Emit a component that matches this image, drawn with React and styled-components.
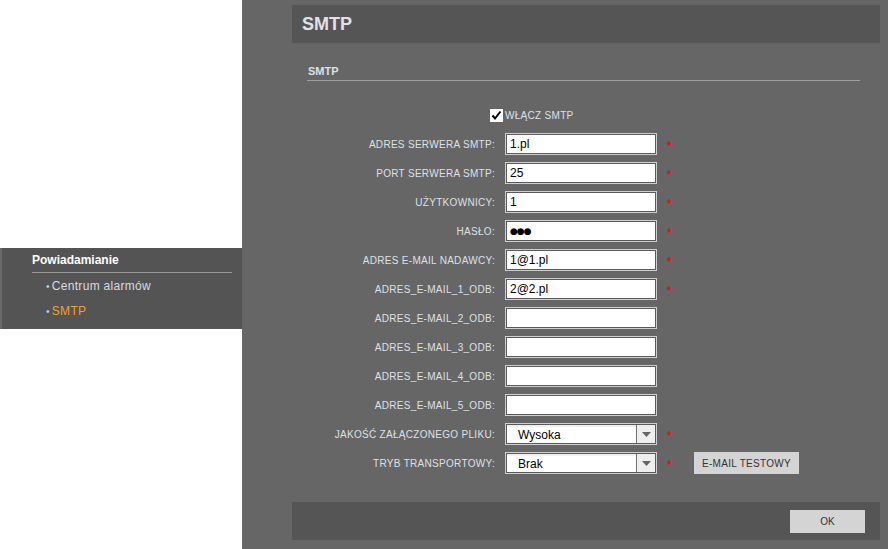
import React from "react";
import styled, { createGlobalStyle } from "styled-components";

const Global = createGlobalStyle`
  html, body { margin: 0; padding: 0; background: #fff; }
  body { font-family: "Liberation Sans", Arial, sans-serif; }
  * { box-sizing: border-box; }
`;

const Page = styled.div`
  display: flex;
  width: 888px;
  height: 549px;
  overflow: hidden;
`;

const LeftCol = styled.div`
  width: 242px;
  flex: none;
  background: #fff;
  padding-top: 248px;
`;

const Sidebar = styled.nav`
  background: #545454;
  border-left: 2px solid #6a6a6a;
  padding: 4px 10px 5px 30px;
`;

const SideHeading = styled.div`
  font-weight: bold;
  font-size: 12px;
  line-height: 16px;
  color: #fff;
  padding-bottom: 4px;
  border-bottom: 1px solid #9a9a9a;
  margin-bottom: 1px;
`;

const SideItem = styled.div`
  font-size: 12px;
  line-height: 24px;
  letter-spacing: 0.3px;
  padding-left: 14px;
  color: ${(p) => (p.$active ? "#f0a030" : "#d8dbe0")};
  &::before {
    content: "•";
    color: #c8c8c8;
    margin-right: 2px;
    font-size: 10px;
  }
`;

const Main = styled.main`
  flex: 1;
  background: #666;
  padding: 5px 8px 0 50px;
  display: flex;
  flex-direction: column;
`;

const HeaderBar = styled.div`
  height: 38px;
  background: #555;
  display: flex;
  align-items: center;
  padding-left: 10px;
  font-weight: bold;
  font-size: 18px;
  color: #e2e2e6;
`;

const Section = styled.section`
  margin: 21px 20px 0 15px;
`;

const SectionTitle = styled.div`
  font-weight: bold;
  font-size: 11px;
  line-height: 14px;
  color: #dde0e6;
  padding: 0 0 2px 1px;
  border-bottom: 1px solid #a0a0a0;
`;

const Form = styled.div`
  margin-top: 23px;
  display: grid;
  grid-template-columns: 188px 152px 7px auto;
  grid-auto-rows: 22px;
  column-gap: 10px;
  row-gap: 7px;
  align-items: center;
`;

const CheckRow = styled.label`
  grid-column: 1 / -1;
  padding-left: 183px;
  display: flex;
  align-items: center;
  gap: 2px;
  font-size: 10px;
  letter-spacing: 0.3px;
  color: #dde0e6;
`;

const CheckBox = styled.span`
  width: 13px;
  height: 13px;
  background: #fff;
  display: inline-flex;
  align-items: center;
  justify-content: center;
`;

const Label = styled.div`
  text-align: right;
  font-size: 10px;
  letter-spacing: 0.3px;
  color: #dde0e6;
  white-space: nowrap;
`;

const Field = styled.input`
  width: 152px;
  height: 22px;
  border: 1px solid #cfcfcf;
  box-shadow: inset 0 0 0 1px #5a5a5a;
  background: #fff;
  padding: 0 4px;
  font-family: ${(p) =>
    p.$dots ? '"DejaVu Sans", sans-serif' : '"Liberation Sans", Arial, sans-serif'};
  font-size: ${(p) => (p.$dots ? "9px" : "12px")};
  letter-spacing: ${(p) => (p.$dots ? "-1px" : "0")};
  color: #000;
  outline: none;
`;

const SelectBox = styled.div`
  width: 152px;
  height: 22px;
  border: 1px solid #cfcfcf;
  box-shadow: inset 0 0 0 1px #5a5a5a;
  background: #fff;
  display: flex;
  font-size: 12px;
  color: #000;
`;

const SelectText = styled.span`
  flex: 1;
  display: flex;
  align-items: center;
  padding-left: 11px;
  border-top: 2px solid #f0f0f0;
  margin: 1px 0 1px 1px;
`;

const SelectArrow = styled.span`
  width: 19px;
  margin: 1px 1px 1px 0;
  background: #eee;
  border-left: 1px solid #707070;
  display: flex;
  align-items: center;
  justify-content: center;
`;

const Star = styled.span`
  color: #e81010;
  font-size: 12px;
  font-weight: bold;
  line-height: 12px;
  height: 12px;
  padding-top: 2px;
`;

const TestButton = styled.button`
  margin-left: 10px;
  height: 22px;
  width: 105px;
  border: none;
  background: #d4d4d4;
  color: #333;
  font-family: "Liberation Sans", Arial, sans-serif;
  font-size: 10px;
  letter-spacing: 0.3px;
  padding: 0;
`;

const Footer = styled.div`
  margin-top: auto;
  margin-bottom: 9px;
  height: 38px;
  background: #555;
  display: flex;
  align-items: center;
  justify-content: flex-end;
  padding-right: 15px;
`;

const OkButton = styled.button`
  width: 75px;
  height: 23px;
  border: none;
  background: #d4d4d4;
  color: #333;
  font-family: "Liberation Sans", Arial, sans-serif;
  font-size: 10px;
`;

const rows = [
  { label: "ADRES SERWERA SMTP:", value: "1.pl", star: true },
  { label: "PORT SERWERA SMTP:", value: "25", star: true },
  { label: "UŻYTKOWNICY:", value: "1", star: true },
  { label: "HASŁO:", value: "●●●", star: true, dots: true },
  { label: "ADRES E-MAIL NADAWCY:", value: "1@1.pl", star: true },
  { label: "ADRES_E-MAIL_1_ODB:", value: "2@2.pl", star: true },
  { label: "ADRES_E-MAIL_2_ODB:", value: "" },
  { label: "ADRES_E-MAIL_3_ODB:", value: "" },
  { label: "ADRES_E-MAIL_4_ODB:", value: "" },
  { label: "ADRES_E-MAIL_5_ODB:", value: "" },
];

const Arrow = () => (
  <svg width="9" height="5" viewBox="0 0 9 5">
    <path d="M0 0H9L4.5 5Z" fill="#666" />
  </svg>
);

const Select = ({ value }) => (
  <SelectBox>
    <SelectText>{value}</SelectText>
    <SelectArrow>
      <Arrow />
    </SelectArrow>
  </SelectBox>
);

export default function App() {
  return (
    <>
      <Global />
      <Page>
        <LeftCol>
          <Sidebar>
            <SideHeading>Powiadamianie</SideHeading>
            <SideItem>Centrum alarmów</SideItem>
            <SideItem $active>SMTP</SideItem>
          </Sidebar>
        </LeftCol>
        <Main>
          <HeaderBar>SMTP</HeaderBar>
          <Section>
            <SectionTitle>SMTP</SectionTitle>
            <Form>
              <CheckRow>
                <CheckBox>
                  <svg width="11" height="11" viewBox="0 0 11 11">
                    <path d="M1.5 5.5L4 8.5L9.5 1.5" stroke="#000" strokeWidth="2" fill="none" />
                  </svg>
                </CheckBox>
                WŁĄCZ SMTP
              </CheckRow>
              {rows.map((r) => (
                <React.Fragment key={r.label}>
                  <Label>{r.label}</Label>
                  <Field type="text" $dots={r.dots} defaultValue={r.value} readOnly />
                  <Star>{r.star ? "*" : ""}</Star>
                  <span />
                </React.Fragment>
              ))}
              <Label>JAKOŚĆ ZAŁĄCZONEGO PLIKU:</Label>
              <Select value="Wysoka" />
              <Star>*</Star>
              <span />
              <Label>TRYB TRANSPORTOWY:</Label>
              <Select value="Brak" />
              <Star>*</Star>
              <TestButton>E-MAIL TESTOWY</TestButton>
            </Form>
          </Section>
          <Footer>
            <OkButton>OK</OkButton>
          </Footer>
        </Main>
      </Page>
    </>
  );
}
